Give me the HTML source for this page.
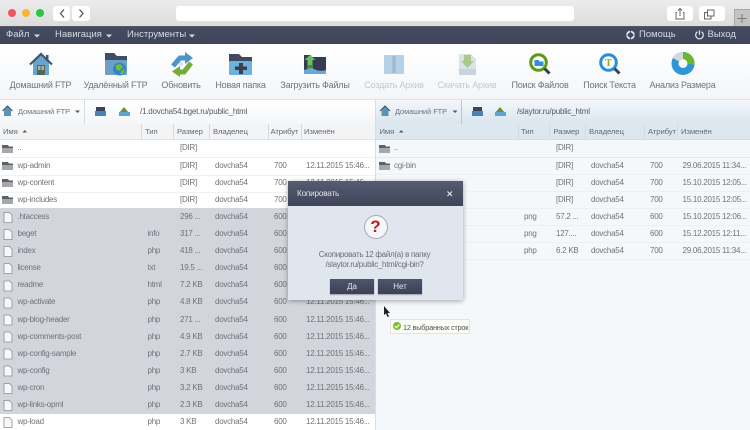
<!DOCTYPE html>
<html lang="ru"><head><meta charset="utf-8"><title>FTP</title>
<style>
html,body{margin:0;padding:0}
body{width:750px;height:430px;overflow:hidden;position:relative;background:#fff}
#w{left:0;top:0;width:750px;height:430px;overflow:hidden;background:#fff;filter:blur(.3px);font-family:"Liberation Sans","DejaVu Sans",sans-serif;font-size:8px;letter-spacing:-.25px;color:#6f737a}
div,span,svg{position:absolute}
.t{white-space:nowrap;line-height:12px}
.c{transform:translateX(-50%)}
.tb{top:79px;font-size:9px;letter-spacing:-.2px;color:#70747a;white-space:nowrap;line-height:12px;transform:translateX(-50%)}
.m{top:29px;font-size:9.5px;letter-spacing:0;color:#d8dbe2;white-space:nowrap;line-height:12px}
.h{top:126px;font-size:7.7px;letter-spacing:-.1px;color:#666b72;white-space:nowrap;line-height:12px}
.sep{top:124px;width:1px;height:15px;background:#d4dbe2}
</style></head><body><div id="w">

<!-- browser chrome -->
<div style="left:0;top:0;width:750px;height:26px;background:linear-gradient(#ececec,#dcdcdc)"></div>
<div style="left:0;top:26px;width:750px;height:1px;background:#55585f"></div>
<div style="left:8px;top:9px;width:8px;height:8px;border-radius:50%;background:#f4555a"></div>
<div style="left:22px;top:9px;width:8px;height:8px;border-radius:50%;background:#fbb52f"></div>
<div style="left:36px;top:9px;width:8px;height:8px;border-radius:50%;background:#2dc644"></div>
<div style="left:53px;top:6px;width:17px;height:15px;background:#fff;border-radius:3px"></div>
<div style="left:72px;top:6px;width:18px;height:15px;background:#fff;border-radius:3px"></div>
<svg style="left:53px;top:6px" width="37" height="15"><path d="M11 3.500L7.500 7.500L11 11.500M26.500 3.500L30 7.500L26.500 11.500" fill="none" stroke="#555" stroke-width="1.300"/></svg>
<div style="left:176px;top:6px;width:398px;height:15px;background:#fff;border-radius:3px"></div>
<div style="left:667px;top:6px;width:26px;height:15px;background:#fff;border-radius:3px"></div>
<div style="left:699px;top:6px;width:26px;height:15px;background:#fff;border-radius:3px"></div>
<svg style="left:667px;top:6px" width="58" height="15"><path d="M10 6.500H9V13H17V6.500H16M13 10V2.500M11 4.500L13 2.500L15 4.500" fill="none" stroke="#666" stroke-width="1"/><path d="M40.500 6.500H37.500V13H44V10M40.500 4V10H47V4Z" fill="none" stroke="#666" stroke-width="1"/></svg>
<div style="left:734px;top:9px;width:16px;height:17px;background:#c4c4c4;border-left:1px solid #a9a9a9;border-top:1px solid #a9a9a9;box-sizing:border-box"></div>
<svg style="left:734px;top:9px" width="16" height="17"><path d="M8 5V14M3.500 9.500H12.500" stroke="#777" stroke-width="1"/></svg>

<!-- menu bar -->
<div style="left:0;top:27px;width:750px;height:17px;background:linear-gradient(#454b62,#3f4459)"></div>
<span class="m" style="left:6px">Файл</span>
<span class="m" style="left:55px">Навигация</span>
<span class="m" style="left:127px">Инструменты</span>
<svg style="left:0;top:27px" width="750" height="17">
<path d="M34 7.500H40L37 10.500ZM106 7.500H112L109 10.500ZM189 7.500H195L192 10.500Z" fill="#d8dbe2"/>
<circle cx="630.500" cy="8" r="3.500" fill="none" stroke="#e4e6eb" stroke-width="1.800"/>
<path d="M630.500 3V13M625.500 8H635.500" stroke="#454b62" stroke-width=".8"/>
<path d="M697.500 4.800A3.800 3.800 0 1 0 701.500 4.800" fill="none" stroke="#e4e6eb" stroke-width="1.200"/>
<path d="M699.500 3.300V7.800" stroke="#e4e6eb" stroke-width="1.200"/>
</svg>
<span class="m" style="left:639px">Помощь</span>
<span class="m" style="left:707.500px">Выход</span>

<!-- toolbar -->
<div style="left:0;top:44px;width:750px;height:55px;background:linear-gradient(#fff,#f3f5f8)"></div>
<div style="left:0;top:99px;width:750px;height:1px;background:#dfe3e8"></div>
<svg style="left:0;top:44px" width="750" height="36">
<!-- home -->
<path d="M33 18L41 10L49 18V31H33Z" fill="#66a5cc"/>
<rect x="46" y="11" width="2.500" height="6" fill="#3f566c"/>
<path d="M30 20.500L41 10L52 20.500" fill="none" stroke="#3f566c" stroke-width="2.200"/>
<rect x="37" y="21" width="8" height="10" fill="#55655a"/>
<rect x="38" y="22" width="2.500" height="4" fill="#a8b59c"/><rect x="41.500" y="22" width="2.500" height="4" fill="#a8b59c"/>
<!-- remote -->
<path d="M105 9H114L117 12H127V28H105Z" fill="#3f4e66"/>
<rect x="105" y="16" width="22" height="15" rx="1" fill="#6c9fc8"/>
<circle cx="119.500" cy="25" r="6.500" fill="#2b86cc"/>
<path d="M116 21L120 20L123 23L119 27L116 25ZM122 26L125 25L123 30L120 30Z" fill="#7cbb2c"/>
<!-- refresh -->
<path d="M173 22L180 14H186" fill="none" stroke="#4f94c8" stroke-width="5"/>
<path d="M185 8L193 14L185 20Z" fill="#4f94c8"/>
<path d="M191 19L184 28H179" fill="none" stroke="#74ad35" stroke-width="5"/>
<path d="M180 22L172 27.500L180 33Z" fill="#74ad35"/>
<circle cx="181" cy="20" r="2" fill="#cfe4f2"/>
<!-- new folder -->
<path d="M229 10H239L242 13H252V28H229Z" fill="#3f4a5f"/>
<rect x="229" y="17" width="23" height="14" rx="1" fill="#6db1dd"/>
<path d="M239 19H243V22.500H247V26H243V30H239V26H235V22.500H239Z" fill="#39404e"/>
<!-- upload -->
<path d="M304 11H311V13H326V28H304Z" fill="#333c50"/>
<path d="M304 26C310 24 313 24 316 26C320 27 323 27 326 26V30H304Z" fill="#68a9d8"/>
<path d="M310 11L315.500 16H312.500V21H307.500V16H304.500Z" fill="#69c25a"/>
<path d="M307 22H313M307 24H313" stroke="#69c25a"/>
<!-- archive -->
<rect x="384" y="11" width="20" height="19" rx="1" fill="#b5d1e7"/>
<path d="M392.500 12H395.500V29H392.500Z" fill="#9eb7ca"/>
<!-- zip -->
<path d="M459 10H471L476 15V31H459Z" fill="#d9e3ec"/>
<path d="M464 11H471V17H474L467.500 24L461 17H464Z" fill="#a8c98a"/>
<rect x="459" y="25" width="17" height="6" fill="#c7d3de"/>
<!-- search files -->
<circle cx="538.500" cy="18.500" r="7.800" fill="#fff" stroke="#5d9a12" stroke-width="3"/>
<path d="M544.500 24.500L549.500 29.500" stroke="#333f46" stroke-width="3"/>
<path d="M534.500 16H538.500L539.500 17.500H543.500V22H534.500Z" fill="#2f8fd8"/>
<!-- search text -->
<circle cx="608.500" cy="18.500" r="7.800" fill="#fff" stroke="#2590dc" stroke-width="3"/>
<path d="M614.500 24.500L619.500 29.500" stroke="#30445a" stroke-width="3"/>
<text x="608.500" y="22" text-anchor="middle" font-family="Liberation Serif" font-size="11" font-weight="bold" fill="#86b52a" letter-spacing="0">T</text>
<!-- pie -->
<circle cx="683" cy="19.500" r="8" fill="none" stroke="#2f96d3" stroke-width="7"/>
<path d="M683 8V15A4.500 4.500 0 0 1 687.500 20L694.500 20.500A11.500 11.500 0 0 0 683 8Z" fill="#6cb62d"/>
<path d="M683 8V15A4.500 4.500 0 0 0 679 17.500L673 14A11.500 11.500 0 0 1 683 8Z" fill="#d5d8d8"/>
</svg>
<span class="tb" style="left:40.500px">Домашний FTP</span>
<span class="tb" style="left:115.500px">Удалённый FTP</span>
<span class="tb" style="left:181px">Обновить</span>
<span class="tb" style="left:240.500px">Новая папка</span>
<span class="tb" style="left:315px">Загрузить Файлы</span>
<span class="tb" style="left:394px;color:#c5c8cc">Создать Архив</span>
<span class="tb" style="left:467px;color:#c5c8cc">Скачать Архив</span>
<span class="tb" style="left:540px">Поиск Файлов</span>
<span class="tb" style="left:609.500px">Поиск Текста</span>
<span class="tb" style="left:682.500px">Анализ Размера</span>

<!-- left pane path + header -->
<div style="left:0;top:100px;width:375px;height:24px;background:linear-gradient(#fff,#f4f6f8)"></div>
<div style="left:84px;top:100px;width:1px;height:24px;background:#d8dde2"></div>
<div style="left:0;top:124px;width:375px;height:15px;background:#f2f4f6;border-bottom:1px solid #dfe3e7"></div>
<!-- right pane -->
<div style="left:375px;top:100px;width:375px;height:24px;background:linear-gradient(#f4f7fa,#d9e5ee)"></div>
<div style="left:461px;top:100px;width:1px;height:24px;background:#b9c7d3"></div>
<div style="left:375px;top:124px;width:375px;height:15px;background:#dce7ef;border-bottom:1px solid #d5dce3"></div>
<div style="left:375px;top:140px;width:375px;height:290px;background:#f5f8fb"></div>
<div style="left:375px;top:100px;width:1px;height:330px;background:#d9dee3"></div>
<div style="left:0;top:157px;width:375px;height:1px;background:#eef0f2"></div>

<svg style="left:0;top:100px" width="750" height="24">
<path d="M7.500 6L3.500 11H4V16H11V11H11.500Z" fill="#5e93b8"/><path d="M2.500 11L7.500 6L12.500 11" fill="none" stroke="#3e5266"/>
<path d="M75 10.500H80L77.500 13ZM452.500 10.500H457.500L455 13Z" fill="#555"/>
<rect x="96" y="7" width="9" height="5" fill="#3a445a"/><rect x="95" y="11" width="11" height="5" fill="#4a82b8"/>
<path d="M124 7L119 13H129Z" fill="#6a8f3a"/><rect x="119" y="12" width="11" height="4" fill="#5fa3d3"/>
<path d="M385 6L381 11H381.500V16H388.500V11H389Z" fill="#5e93b8"/><path d="M380 11L385 6L390 11" fill="none" stroke="#3e5266"/>
<rect x="473" y="7" width="9" height="5" fill="#3a445a"/><rect x="472" y="11" width="11" height="5" fill="#4a82b8"/>
<path d="M500 7L495 13H505Z" fill="#6a8f3a"/><rect x="495" y="12" width="11" height="4" fill="#5fa3d3"/>
</svg>
<span class="t" style="left:18px;top:105.500px;font-size:7.300px;letter-spacing:0">Домашний FTP</span>
<span class="t" style="left:140px;top:105.500px;font-size:8px;letter-spacing:-.2px;color:#555a62">/1.dovcha54.bget.ru/public_html</span>
<span class="t" style="left:395px;top:105.500px;font-size:7.300px;letter-spacing:0">Домашний FTP</span>
<span class="t" style="left:517px;top:105.500px;font-size:8px;letter-spacing:-.2px;color:#555a62">/slaytor.ru/public_html</span>

<!-- headers -->
<span class="h" style="left:3px">Имя</span><span class="h" style="left:145px">Тип</span><span class="h" style="left:177px">Размер</span><span class="h" style="left:213px">Владелец</span><span class="h" style="left:270.500px">Атрибут</span><span class="h" style="left:304px">Изменён</span>
<span class="h" style="left:379.500px">Имя</span><span class="h" style="left:521px">Тип</span><span class="h" style="left:553.500px">Размер</span><span class="h" style="left:589px">Владелец</span><span class="h" style="left:648px">Атрибут</span><span class="h" style="left:681px">Изменён</span>
<div class="sep" style="left:141px"></div><div class="sep" style="left:173px"></div><div class="sep" style="left:209px"></div><div class="sep" style="left:268px"></div><div class="sep" style="left:301px"></div>
<div class="sep" style="left:518px"></div><div class="sep" style="left:549px"></div><div class="sep" style="left:585px"></div><div class="sep" style="left:644px"></div><div class="sep" style="left:677px"></div>
<svg style="left:0;top:124px" width="750" height="15"><path d="M22.500 8.500H27L24.750 6ZM399 8.500H403.500L401.250 6Z" fill="#555"/></svg>

<!-- selection + lines -->
<div style="left:0;top:208px;width:375px;height:206px;background:#d2d5dc"></div>
<div style="left:0;top:174.500px;width:375px;height:1px;background:#f0f1f3"></div>
<div style="left:0;top:191.500px;width:375px;height:1px;background:#f0f1f3"></div>
<div style="left:376px;top:157px;width:374px;height:1px;background:#e3e8ec"></div>
<div style="left:376px;top:174px;width:374px;height:1px;background:#eef1f4"></div>
<div style="left:376px;top:191px;width:374px;height:1px;background:#eef1f4"></div>
<div style="left:376px;top:208px;width:374px;height:1px;background:#eef1f4"></div>
<div style="left:376px;top:225px;width:374px;height:1px;background:#eef1f4"></div>
<div style="left:376px;top:242px;width:374px;height:1px;background:#eef1f4"></div>
<div style="left:376px;top:259px;width:374px;height:1px;background:#eef1f4"></div>

<!-- row icons -->
<svg style="left:0;top:140px" width="420" height="290">
<g fill="#5c6068">
<path d="M2 5H8L9 6.500H13V8H2Z"/><path d="M2 22H8L9 23.500H13V25H2Z"/><path d="M2 39H8L9 40.500H13V42H2Z"/><path d="M2 56H8L9 57.500H13V59H2Z"/>
<path d="M379 5H385L386 6.500H390V8H379Z"/><path d="M379 22H385L386 23.500H390V25H379Z"/>
</g>
<g fill="#a4a8ad">
<rect x="2" y="8" width="11" height="5"/><rect x="2" y="25" width="11" height="5"/><rect x="2" y="42" width="11" height="5"/><rect x="2" y="59" width="11" height="5"/>
<rect x="379" y="8" width="11" height="5"/><rect x="379" y="25" width="11" height="5"/>
</g>
<g fill="#f7f8f9" stroke="#8b9096" stroke-width=".8" transform="translate(0 1)">
<path d="M4 71.500H9.500L12 74V81.500H4Z"/><path d="M4 88.500H9.500L12 91V98.500H4Z"/><path d="M4 105.500H9.500L12 108V115.500H4Z"/><path d="M4 122.500H9.500L12 125V132.500H4Z"/><path d="M4 140H9.500L12 142.500V150H4Z"/><path d="M4 157H9.500L12 159.500V167H4Z"/><path d="M4 174H9.500L12 176.500V184H4Z"/><path d="M4 191H9.500L12 193.500V201H4Z"/><path d="M4 208H9.500L12 210.500V218H4Z"/><path d="M4 225H9.500L12 227.500V235H4Z"/><path d="M4 242.500H9.500L12 245V252.500H4Z"/><path d="M4 259.500H9.500L12 262V269.500H4Z"/><path d="M4 276.500H9.500L12 279V286.500H4Z"/>
</g>
</svg>

<!-- rows left -->
<span class="t" style="left:17.500px;top:142px">..</span><span class="t" style="left:180px;top:142px">[DIR]</span>
<span class="t" style="left:17.500px;top:159.500px">wp-admin</span><span class="t" style="left:180px;top:159.500px">[DIR]</span><span class="t" style="left:215px;top:159.500px">dovcha54</span><span class="t" style="left:274px;top:159.500px">700</span><span class="t" style="left:306px;top:159.500px">12.11.2015 15:46...</span>
<span class="t" style="left:17.500px;top:176.500px">wp-content</span><span class="t" style="left:180px;top:176.500px">[DIR]</span><span class="t" style="left:215px;top:176.500px">dovcha54</span><span class="t" style="left:274px;top:176.500px">700</span><span class="t" style="left:306px;top:176.500px">12.11.2015 15:46...</span>
<span class="t" style="left:17.500px;top:193.500px">wp-includes</span><span class="t" style="left:180px;top:193.500px">[DIR]</span><span class="t" style="left:215px;top:193.500px">dovcha54</span><span class="t" style="left:274px;top:193.500px">700</span><span class="t" style="left:306px;top:193.500px">12.11.2015 15:46...</span>
<span class="t" style="left:17.500px;top:211px">.htaccess</span><span class="t" style="left:180px;top:211px">296 ...</span><span class="t" style="left:215px;top:211px">dovcha54</span><span class="t" style="left:274px;top:211px">600</span><span class="t" style="left:306px;top:211px">12.11.2015 15:46...</span>
<span class="t" style="left:17.500px;top:228px">beget</span><span class="t" style="left:147.500px;top:228px">info</span><span class="t" style="left:180px;top:228px">317 ...</span><span class="t" style="left:215px;top:228px">dovcha54</span><span class="t" style="left:274px;top:228px">600</span><span class="t" style="left:306px;top:228px">12.11.2015 15:46...</span>
<span class="t" style="left:17.500px;top:245px">index</span><span class="t" style="left:147.500px;top:245px">php</span><span class="t" style="left:180px;top:245px">418 ...</span><span class="t" style="left:215px;top:245px">dovcha54</span><span class="t" style="left:274px;top:245px">600</span><span class="t" style="left:306px;top:245px">12.11.2015 15:46...</span>
<span class="t" style="left:17.500px;top:262px">license</span><span class="t" style="left:147.500px;top:262px">txt</span><span class="t" style="left:180px;top:262px">19.5 ...</span><span class="t" style="left:215px;top:262px">dovcha54</span><span class="t" style="left:274px;top:262px">600</span><span class="t" style="left:306px;top:262px">12.11.2015 15:46...</span>
<span class="t" style="left:17.500px;top:279px">readme</span><span class="t" style="left:147.500px;top:279px">html</span><span class="t" style="left:180px;top:279px">7.2 KB</span><span class="t" style="left:215px;top:279px">dovcha54</span><span class="t" style="left:274px;top:279px">600</span><span class="t" style="left:306px;top:279px">12.11.2015 15:46...</span>
<span class="t" style="left:17.500px;top:296px">wp-activate</span><span class="t" style="left:147.500px;top:296px">php</span><span class="t" style="left:180px;top:296px">4.8 KB</span><span class="t" style="left:215px;top:296px">dovcha54</span><span class="t" style="left:274px;top:296px">600</span><span class="t" style="left:306px;top:296px">12.11.2015 15:46...</span>
<span class="t" style="left:17.500px;top:313.500px">wp-blog-header</span><span class="t" style="left:147.500px;top:313.500px">php</span><span class="t" style="left:180px;top:313.500px">271 ...</span><span class="t" style="left:215px;top:313.500px">dovcha54</span><span class="t" style="left:274px;top:313.500px">600</span><span class="t" style="left:306px;top:313.500px">12.11.2015 15:46...</span>
<span class="t" style="left:17.500px;top:330.500px">wp-comments-post</span><span class="t" style="left:147.500px;top:330.500px">php</span><span class="t" style="left:180px;top:330.500px">4.9 KB</span><span class="t" style="left:215px;top:330.500px">dovcha54</span><span class="t" style="left:274px;top:330.500px">600</span><span class="t" style="left:306px;top:330.500px">12.11.2015 15:46...</span>
<span class="t" style="left:17.500px;top:347.500px">wp-config-sample</span><span class="t" style="left:147.500px;top:347.500px">php</span><span class="t" style="left:180px;top:347.500px">2.7 KB</span><span class="t" style="left:215px;top:347.500px">dovcha54</span><span class="t" style="left:274px;top:347.500px">600</span><span class="t" style="left:306px;top:347.500px">12.11.2015 15:46...</span>
<span class="t" style="left:17.500px;top:364.500px">wp-config</span><span class="t" style="left:147.500px;top:364.500px">php</span><span class="t" style="left:180px;top:364.500px">3 KB</span><span class="t" style="left:215px;top:364.500px">dovcha54</span><span class="t" style="left:274px;top:364.500px">600</span><span class="t" style="left:306px;top:364.500px">12.11.2015 15:46...</span>
<span class="t" style="left:17.500px;top:382px">wp-cron</span><span class="t" style="left:147.500px;top:382px">php</span><span class="t" style="left:180px;top:382px">3.2 KB</span><span class="t" style="left:215px;top:382px">dovcha54</span><span class="t" style="left:274px;top:382px">600</span><span class="t" style="left:306px;top:382px">12.11.2015 15:46...</span>
<span class="t" style="left:17.500px;top:399px">wp-links-opml</span><span class="t" style="left:147.500px;top:399px">php</span><span class="t" style="left:180px;top:399px">2.3 KB</span><span class="t" style="left:215px;top:399px">dovcha54</span><span class="t" style="left:274px;top:399px">600</span><span class="t" style="left:306px;top:399px">12.11.2015 15:46...</span>
<span class="t" style="left:17.500px;top:416px">wp-load</span><span class="t" style="left:147.500px;top:416px">php</span><span class="t" style="left:180px;top:416px">3 KB</span><span class="t" style="left:215px;top:416px">dovcha54</span><span class="t" style="left:274px;top:416px">600</span><span class="t" style="left:306px;top:416px">12.11.2015 15:46...</span>

<!-- rows right -->
<span class="t" style="left:394px;top:142px">..</span><span class="t" style="left:556px;top:142px">[DIR]</span>
<span class="t" style="left:394px;top:159.500px">cgi-bin</span><span class="t" style="left:556px;top:159.500px">[DIR]</span><span class="t" style="left:591px;top:159.500px">dovcha54</span><span class="t" style="left:650px;top:159.500px">700</span><span class="t" style="left:682.500px;top:159.500px">29.06.2015 11:34...</span>
<span class="t" style="left:556px;top:176.500px">[DIR]</span><span class="t" style="left:591px;top:176.500px">dovcha54</span><span class="t" style="left:650px;top:176.500px">700</span><span class="t" style="left:682.500px;top:176.500px">15.10.2015 12:05...</span>
<span class="t" style="left:556px;top:193.500px">[DIR]</span><span class="t" style="left:591px;top:193.500px">dovcha54</span><span class="t" style="left:650px;top:193.500px">700</span><span class="t" style="left:682.500px;top:193.500px">15.10.2015 12:05...</span>
<span class="t" style="left:524px;top:211px">png</span><span class="t" style="left:556px;top:211px">57.2 ...</span><span class="t" style="left:591px;top:211px">dovcha54</span><span class="t" style="left:650px;top:211px">600</span><span class="t" style="left:682.500px;top:211px">15.10.2015 12:06...</span>
<span class="t" style="left:524px;top:228px">png</span><span class="t" style="left:556px;top:228px">127....</span><span class="t" style="left:591px;top:228px">dovcha54</span><span class="t" style="left:650px;top:228px">600</span><span class="t" style="left:682.500px;top:228px">15.12.2015 12:11...</span>
<span class="t" style="left:524px;top:245px">php</span><span class="t" style="left:556px;top:245px">6.2 KB</span><span class="t" style="left:591px;top:245px">dovcha54</span><span class="t" style="left:650px;top:245px">700</span><span class="t" style="left:682.500px;top:245px">29.06.2015 11:34...</span>

<!-- dialog -->
<div style="left:288px;top:181px;width:175px;height:119px;background:#dfe6ee;box-shadow:0 1px 5px rgba(0,0,0,.35)"></div>
<div style="left:288px;top:181px;width:175px;height:25px;background:linear-gradient(#555b70,#3f4459)"></div>
<span class="t" style="left:297px;top:187.500px;font-size:8.200px;letter-spacing:-.2px;color:#dfe2e8">Копировать</span>
<svg style="left:445px;top:189px" width="10" height="10"><path d="M2.500 2.500L7 7M7 2.500L2.500 7" stroke="#e6e8ec" stroke-width="1.100"/></svg>
<div style="left:364px;top:215px;width:22px;height:22px;border-radius:50%;background:#f6f6f6;border:1px solid #a5abb2"></div>
<span class="t c" style="left:375.500px;top:217px;font-size:17px;letter-spacing:0;line-height:19px;font-weight:bold;color:#c01a22">?</span>
<span class="t c" style="left:374.500px;top:249px;font-size:8px;letter-spacing:-.3px;color:#6b7077">Скопировать 12 файл(а) в папку</span>
<span class="t c" style="left:374.500px;top:259px;font-size:8px;letter-spacing:-.3px;color:#6b7077">/slaytor.ru/public_html/cgi-bin?</span>
<div style="left:330px;top:279px;width:44px;height:15px;background:linear-gradient(#4f556b,#3c4157);box-shadow:0 1px 1px rgba(0,0,0,.3)"></div>
<div style="left:378px;top:279px;width:44px;height:15px;background:linear-gradient(#4f556b,#3c4157);box-shadow:0 1px 1px rgba(0,0,0,.3)"></div>
<span class="t c" style="left:352px;top:281px;font-size:8px;letter-spacing:0;color:#e4e6eb">Да</span>
<span class="t c" style="left:400px;top:281px;font-size:8px;letter-spacing:0;color:#e4e6eb">Нет</span>

<!-- cursor + tooltip -->
<svg style="left:383px;top:306px" width="8" height="12"><path d="M1 0V9L3 7.500L4.500 11L6 10.500L4.500 7H7Z" fill="#222"/></svg>
<div style="left:390px;top:319px;width:80px;height:15px;background:#fbfcf8;border:1px solid #e0e3e0;box-sizing:border-box"></div>
<div style="left:393px;top:322px;width:8px;height:8px;border-radius:50%;background:#7cbc2e"></div>
<svg style="left:393px;top:322px" width="8" height="8"><path d="M1.800 4L3.500 5.700L6.300 2.500" fill="none" stroke="#fff" stroke-width="1.100"/></svg>
<span class="t" style="left:403px;top:322px;font-size:7.400px;letter-spacing:-.25px;color:#555">12 выбранных строк</span>
</div></body></html>
